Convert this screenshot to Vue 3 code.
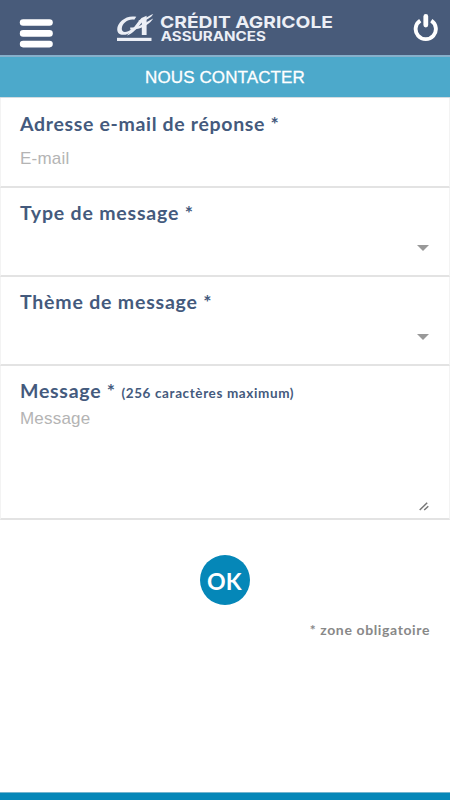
<script setup>
import { ref } from 'vue'

const email = ref('')
const message = ref('')
const selects = [
  { id: 'type', label: 'Type de message', cls: 'label-type' },
  { id: 'theme', label: 'Thème de message', cls: 'label-theme' },
]
</script>

<template>
  <div class="page">
    <header class="topbar">
      <button class="icon-btn" aria-label="Menu">
        <svg width="34" height="29" viewBox="0 0 34 29">
          <g fill="#fff">
            <rect x="0.8" y="0.2" width="33" height="6.6" rx="3.3" />
            <rect x="0.8" y="11.1" width="33" height="6.6" rx="3.3" />
            <rect x="0.8" y="21.8" width="33" height="6.6" rx="3.3" />
          </g>
        </svg>
      </button>
      <svg class="logo" width="218" height="34" viewBox="0 0 218 34">
        <g fill="#eceff6">
          <path d="M20.3 6.8C10.5 4.6 1.2 12 1.2 19.2C1.2 26.8 10.8 26.2 17.4 20.4L16 18.8C10.5 23.4 5.6 23 5.8 18.6C6 13.4 12.5 8.6 18.2 9.8Z" />
          <path d="M25.5 8L30.6 5.8V25H25.8V12.4C21.6 17.6 17 23.6 10.8 25.4C16 20.8 20.5 13.4 25.5 8Z" />
          <path d="M14.2 17.4C22.8 18.4 29 12.6 37.2 8.6C34.5 13.6 25 20.4 14.2 19.6Z" />
          <path d="M22.5 10.4C28.5 9.6 32 6.2 37.2 4C35.5 7.6 29.5 11 23 12Z" />
        </g>
        <rect x="1" y="27.8" width="34.5" height="3.2" fill="#eceff6" />
        <text class="brand" x="44" y="17.8" textLength="173" lengthAdjust="spacingAndGlyphs">CRÉDIT AGRICOLE</text>
        <text class="brand sub" x="44.8" y="31" textLength="105" lengthAdjust="spacingAndGlyphs">ASSURANCES</text>
      </svg>
      <button class="icon-btn" aria-label="Déconnexion">
        <svg width="25" height="30" viewBox="0 0 25 30">
          <g fill="none" stroke="#fff">
            <path d="M7.2 8.6A10.1 10.1 0 1 0 18.3 8.6" stroke-width="3.9" />
            <path d="M12.8 4.4V13" stroke-width="4.8" stroke-linecap="round" />
          </g>
        </svg>
      </button>
    </header>
    <h1 class="title"><span>NOUS CONTACTER</span></h1>

    <form @submit.prevent>
      <div class="field">
        <label class="label label-mail" for="mail">Adresse e-mail de réponse *</label>
        <input id="mail" v-model="email" class="control" type="text" placeholder="E-mail" />
      </div>
      <div v-for="s in selects" :key="s.id" class="field">
        <span class="label" :class="s.cls">{{ s.label }} *</span>
        <div class="select">
          <svg width="12" height="6" viewBox="0 0 12 6"><path d="M0 0H12L6 6Z" fill="#999" /></svg>
        </div>
      </div>
      <div class="field field-message">
        <label class="label" for="msg"><span class="label-message">Message *</span> <small>(256 caractères maximum)</small></label>
        <textarea id="msg" v-model="message" class="control" placeholder="Message"></textarea>
        <svg class="grip" width="10" height="9" viewBox="0 0 10 9">
          <path d="M.7 8L8.2 .8M5.2 8L9.3 4.2" stroke="#777" stroke-width="1.5" />
        </svg>
      </div>
      <button class="ok" type="submit">
        <svg width="50" height="50" viewBox="0 0 50 50">
          <circle cx="25" cy="25" r="25" fill="#0587b8" />
          <text x="7" y="34.6" textLength="34.5" lengthAdjust="spacingAndGlyphs">OK</text>
        </svg>
      </button>
      <p class="note"><span>* zone obligatoire</span></p>
    </form>
    <footer class="bottom"></footer>
  </div>
</template>

<style>
body {
  margin: 0;
  background: #fff;
}
</style>

<style scoped>
.page {
  box-sizing: border-box;
  display: flex;
  flex-direction: column;
  height: 800px;
  overflow: hidden;
  background: #fff;
  font-family: "Liberation Sans", Arial, sans-serif;
}
.topbar {
  box-sizing: border-box;
  display: grid;
  grid-template-columns: 97px 218px 1fr;
  flex: none;
  height: 55px;
  padding: 0 12px 0 19px;
  background: #485b7a;
}
.icon-btn {
  padding: 0;
  border: 0;
  background: none;
  justify-self: start;
  align-self: start;
  margin-top: 19px;
  line-height: 0;
}
.icon-btn:last-child {
  justify-self: end;
  margin-top: 12px;
}
svg {
  display: block;
}
.logo {
  margin-top: 10px;
}
.brand {
  font: 700 16.5px Inter, sans-serif;
  fill: #eceff6;
}
.brand.sub {
  font-size: 12.5px;
}
.title {
  box-sizing: border-box;
  flex: none;
  height: 43px;
  margin: 0;
  border-top: 2px solid #87b0cb;
  border-bottom: 1px solid #d3dce1;
  background: #4ca9cb;
  color: #fff;
  font-size: 17px;
  font-weight: 400;
  line-height: 41px;
  letter-spacing: 0.1px;
  text-align: center;
  -webkit-text-stroke: 0.3px #fff;
}
.field {
  box-sizing: border-box;
  display: flex;
  flex-direction: column;
  height: 89px;
  padding: 12px 20px 0 19px;
  border: 1px solid #f3f3f3;
  border-top: 0;
  border-bottom: 2px solid #e3e3e3;
  background: #fff;
}
.field:first-child {
  height: 90px;
  padding-top: 13px;
}
.field:first-child .control {
  margin-top: 10px;
}
.label {
  height: 26px;
  color: #445a7d;
  font: 700 19.5px/26px Lato, sans-serif;
  letter-spacing: 0.75px;
  white-space: nowrap;
}
.label-mail {
  letter-spacing: 0.67px;
}
.label-type,
.label-theme {
  letter-spacing: 0.8px;
}
.label small {
  font-size: 13.5px;
  letter-spacing: 0.62px;
}
.control {
  box-sizing: border-box;
  display: block;
  width: 100%;
  height: 24px;
  margin: 9px 0 0;
  padding: 0;
  border: 0;
  outline: 0;
  resize: none;
  background: transparent;
  color: #555;
  font: 17px/24px "Liberation Sans", Arial, sans-serif;
  letter-spacing: 0.2px;
}
.control::placeholder {
  color: #b4b4b4;
  opacity: 1;
}
.select {
  display: flex;
  justify-content: flex-end;
  align-items: center;
  height: 18px;
  margin-top: 13px;
}
.field-message {
  height: 154px;
}
.field-message .control {
  height: 80px;
  margin-top: 3px;
}
.grip {
  align-self: flex-end;
  margin-top: 15px;
}
.ok {
  display: block;
  width: 50px;
  height: 50px;
  margin: 35px auto 0;
  padding: 0;
  border: 0;
  background: none;
}
.ok text {
  font: 700 23px Lato, sans-serif;
  fill: #fff;
}
.note {
  margin: 15px 20px 0 0;
  color: #888;
  font: 700 14px/20px Lato, sans-serif;
  letter-spacing: 0.62px;
  text-align: right;
}
.bottom {
  flex: none;
  box-sizing: border-box;
  height: 8px;
  margin-top: auto;
  border-top: 1px solid #74b5cf;
  background: #0587b8;
}
</style>
